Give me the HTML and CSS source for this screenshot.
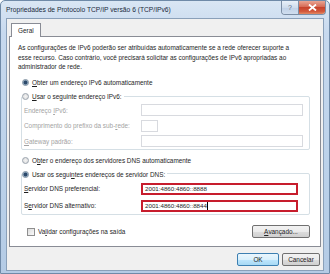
FILE: index.html
```html
<!DOCTYPE html>
<html lang="pt">
<head>
<meta charset="utf-8">
<link rel="stylesheet" href="styles.css">
</head>
<body>
<div class="window">
  <div class="titlebar">
    <span class="title">Propriedades de Protocolo TCP/IP versão 6 (TCP/IPv6)</span>
    <div class="caption-btns">
      <span class="btn-help">?</span>
      <span class="btn-close"><svg width="9" height="7" viewBox="0 0 9 7"><path d="M1 0.5 L8 6.5 M8 0.5 L1 6.5" stroke="#fff" stroke-width="1.8"/></svg></span>
    </div>
  </div>
  <div class="client">
    <div class="tabs"><span class="tab">Geral</span></div>
    <div class="panel">
      <p class="intro">As configurações de IPv6 poderão ser atribuídas automaticamente se a rede oferecer suporte a esse recurso. Caso contrário, você precisará solicitar as configurações de IPv6 apropriadas ao administrador de rede.</p>

      <div class="radio-row first"><span class="radio checked"></span><span><u>O</u>bter um endereço IPv6 automaticamente</span></div>
      <div class="group g1">
        <div class="radio-row legend"><span class="radio"></span><span><u>U</u>sar o seguinte endereço IPv6:</span></div>
        <div class="field disabled"><span class="lbl">Endereço <u>I</u>Pv6:</span><span class="input wide"></span></div>
        <div class="field disabled"><span class="lbl">Comprimento do prefixo da sub-<u>r</u>ede:</span><span class="input small"></span></div>
        <div class="field disabled"><span class="lbl"><u>G</u>ateway padrão:</span><span class="input wide"></span></div>
      </div>

      <div class="radio-row dns"><span class="radio"></span><span>O<u>b</u>ter o endereço dos servidores DNS automaticamente</span></div>
      <div class="group g2">
        <div class="radio-row legend"><span class="radio checked"></span><span>Usar os segui<u>n</u>tes endereços de servidor DNS:</span></div>
        <div class="field tall"><span class="lbl"><u>S</u>ervidor DNS preferencial:</span><span class="input red">2001:4860:4860::8888</span></div>
        <div class="field tall"><span class="lbl">S<u>e</u>rvidor DNS alternativo:</span><span class="input red">2001:4860:4860::8844<span class="caret"></span></span></div>
      </div>

      <div class="bottom-row">
        <label class="check"><span class="box"></span><span>Va<u>l</u>idar configurações na saída</span></label>
        <span class="button adv"><u>A</u>vançado...</span>
      </div>
    </div>
    <div class="dlg-btns">
      <span class="button ok">OK</span>
      <span class="button">Cancelar</span>
    </div>
  </div>
</div>
</body>
</html>
```

FILE: styles.css
```css
* { box-sizing: border-box; }
html, body { margin: 0; padding: 0; }
body {
  width: 330px;
  height: 274px;
  overflow: hidden;
  font-family: "Liberation Sans", Arial, sans-serif;
  font-size: 6.4px;
  color: #1e1e1e;
  background: #fff;
}
u { text-decoration: underline; text-underline-offset: 1px; }

.window {
  width: 330px;
  height: 274px;
  display: flex;
  flex-direction: column;
  padding: 0 5px 5px 5px;
  background: linear-gradient(180deg, #d9e6f4 0%, #c7d9ee 12%, #bcd2ea 60%, #b4cbe5 100%);
  border: 1px solid #6f8aa8;
  border-radius: 5px 5px 0 0;
}

.titlebar {
  height: 17px;
  flex: none;
  display: flex;
  align-items: flex-start;
  justify-content: space-between;
}
.title {
  font-size: 6.7px;
  color: #1b2a3c;
  margin-top: 5px;
}
.caption-btns {
  display: flex;
  margin-right: -2px;
  border: 1px solid #7c8ea5;
  border-top: none;
  border-radius: 0 0 4px 4px;
  overflow: hidden;
  height: 14px;
}
.btn-help {
  width: 17px;
  display: flex;
  align-items: center;
  justify-content: center;
  font-size: 7px;
  color: #5d6f85;
  background: linear-gradient(180deg, #e9f0f8, #cfdcec 50%, #bfd0e6 51%, #d0deef);
  border-right: 1px solid #7c8ea5;
}
.btn-close {
  width: 26px;
  display: flex;
  align-items: center;
  justify-content: center;
  background: linear-gradient(180deg, #e9a593, #d66a55 45%, #c7442d 50%, #d2583c 80%, #e38a63);
}

.client {
  flex: 1;
  display: flex;
  flex-direction: column;
  background: #f0f0f0;
  border: 1px solid #8aa0b9;
  padding: 3px 2px 4px 2px;
}

.tabs { display: flex; height: 14px; padding-left: 2px; flex: none; }
.tab {
  background: #fff;
  border: 1px solid #898c95;
  border-bottom: none;
  padding: 3px 6px 0 6px;
  position: relative;
  top: 1px;
  z-index: 1;
  height: 14px;
}

.panel {
  background: #fff;
  border: 1px solid #898c95;
  height: 211px;
  flex: none;
  padding: 6px 8px 0 8px;
  display: flex;
  flex-direction: column;
}
.intro { margin: 0; line-height: 9.5px; padding-right: 8px; }

.radio-row {
  display: flex;
  align-items: center;
  gap: 3px;
  height: 10px;
  flex: none;
  margin-left: 4px;
}
.radio-row.first { margin-top: 6px; }
.radio-row.dns { margin-top: 5px; }
.radio-row.legend {
  margin: -5px 0 0 -2px;
  background: #fff;
  align-self: flex-start;
  padding-right: 2px;
  padding-left: 0;
}
.radio {
  width: 7px;
  height: 7px;
  border-radius: 50%;
  border: 1px solid #9aa3ad;
  background: radial-gradient(circle, #f3f3f3, #dadada);
  flex: none;
}
.radio.checked {
  background: radial-gradient(circle, #2c4a6b 0 1.6px, #8ca3bb 2.2px, #e6ecf2 3px);
  border-color: #7d8f9f;
}

.group {
  margin: 8px 2px 0 3px;
  border: 1px solid #d5dfe5;
  border-radius: 2px;
  padding: 0 0 0 2px;
  display: flex;
  flex-direction: column;
  flex: none;
}
.radio-row.legend + .field { margin-top: 1px; }
.field {
  display: flex;
  align-items: center;
  height: 15.5px;
  flex: none;
}
.field.tall { height: 17px; }
.field.disabled { color: #a3a3a3; }
.lbl { width: 117px; flex: none; }
.input {
  height: 12px;
  border: 1px solid #abadb3;
  background: #fff;
  padding: 0 2px;
  display: flex;
  align-items: center;
  font-size: 6.2px;
}
.disabled .input { border-color: #d8dadf; }
.input.wide { width: 162px; }
.input.small { width: 17px; }
.input.red {
  width: 157px;
  border: 2px solid #c71d2d;
  padding-left: 2px;
}
.caret {
  width: 1px;
  height: 8px;
  background: #000;
  margin-left: 0.5px;
}

.bottom-row {
  display: flex;
  align-items: center;
  justify-content: space-between;
  margin: 10px 2px 0 9px;
  flex: none;
}
.check { display: flex; align-items: center; gap: 3px; }
.box {
  width: 8px;
  height: 8px;
  border: 1px solid #8f8f8f;
  background: linear-gradient(135deg, #dcdcdc, #fafafa);
}

.button {
  height: 13px;
  min-width: 36px;
  padding: 0 5px;
  display: flex;
  align-items: center;
  justify-content: center;
  border: 1px solid #707070;
  border-radius: 2px;
  background: linear-gradient(180deg, #f2f2f2 0%, #ebebeb 50%, #dddddd 51%, #cfcfcf 100%);
  color: #222;
}
.button.adv { width: 58px; }
.button.ok {
  border-color: #3c7fb1;
  background: linear-gradient(180deg, #eaf6fd 0%, #d9f0fc 50%, #bee6fd 51%, #a7d9f5 100%);
}

.dlg-btns {
  display: flex;
  justify-content: flex-end;
  gap: 3px;
  margin-top: 6px;
  padding-right: 1px;
  flex: none;
}
.dlg-btns .button { width: 38px; }
.dlg-btns .button.ok { width: 42px; }
```
